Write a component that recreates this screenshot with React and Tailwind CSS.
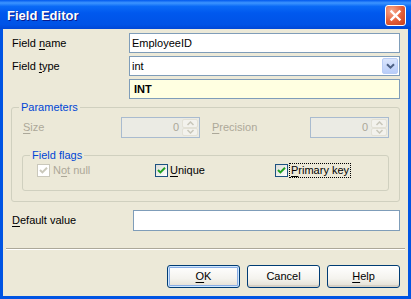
import React from 'react';

const Acc = ({ children }) => <span className="underline underline-offset-[2px]">{children}</span>;

const CheckBox = ({ checked, disabled }) => (
  <span
    className={`w-[13px] h-[13px] border flex items-center justify-center shrink-0 ${
      disabled ? 'border-[#cac8bb] bg-white' : 'border-[#1c5180] bg-[linear-gradient(135deg,#dcdcd7,#ffffff)]'
    }`}
  >
    {checked && (
      <svg width="11" height="11" viewBox="0 0 11 11">
        <path d="M2 5 L4.4 7.4 L9 2.8" fill="none" stroke={disabled ? '#cac8bb' : '#21a121'} strokeWidth="2" />
      </svg>
    )}
  </span>
);

const SpinArrow = ({ up }) => (
  <div className="flex-1 flex items-center justify-center bg-[#f3f2ed] border border-[#e3e1d6] rounded-[2px]">
    <svg width="9" height="5" viewBox="0 0 9 5">
      <path d={up ? 'M1.5 4 L4.5 1 L7.5 4' : 'M1.5 1 L4.5 4 L7.5 1'} fill="none" stroke="#c9c7ba" strokeWidth="1.5" />
    </svg>
  </div>
);

const SpinBox = ({ value }) => (
  <div className="w-[79px] h-[21px] border border-[#a9bbcf] bg-[#ebebe4] flex items-stretch p-[1px]">
    <span className="flex-1 text-right pr-[3px] text-[#aca899] leading-[17px]">{value}</span>
    <div className="w-[16px] flex flex-col">
      <SpinArrow up />
      <SpinArrow />
    </div>
  </div>
);

const XpButton = ({ children, isDefault }) => (
  <button
    className={`w-[73px] h-[23px] border border-[#003c74] rounded-[3px] bg-[linear-gradient(to_bottom,#ffffff,#f4f3ee_60%,#e3ded2)] text-black ${
      isDefault ? 'shadow-[inset_0_0_0_1px_#cee7ff,inset_0_0_0_2px_#89ade4]' : 'shadow-[inset_0_-2px_0_#d6d0c5]'
    }`}
  >
    {children}
  </button>
);

export default function App() {
  return (
    <div className="w-[411px] h-[299px] bg-[#0054e3] flex flex-col font-['Liberation_Sans',Arial,sans-serif] text-[11px] text-black">
      {/* Title bar */}
      <div className="h-[29px] shrink-0 flex items-start justify-between pl-[7px] pr-[5px] bg-[linear-gradient(to_bottom,#0058ee_0%,#3d95ff_10%,#0a6af6_22%,#0058ee_45%,#0053e6_85%,#0047d6_100%)]">
        <span className="mt-[6px] text-[13px] font-bold text-white [text-shadow:1px_1px_#0a1a8c]">Field Editor</span>
        <div className="mt-[5px] w-[21px] h-[21px] rounded-[3px] border border-white bg-[radial-gradient(circle_at_30%_25%,#f7a98d,#e35d38_55%,#c63f1d)] flex items-center justify-center">
          <svg width="13" height="13" viewBox="0 0 13 13">
            <path d="M2.5 2.5 L10.5 10.5 M10.5 2.5 L2.5 10.5" stroke="white" strokeWidth="2.4" strokeLinecap="square" />
          </svg>
        </div>
      </div>

      {/* Client area */}
      <div className="flex-1 mx-[3px] mb-[3px] bg-[#ece9d8] px-[8px] pt-[4px] pb-[8px] flex flex-col">
        <div className="flex flex-col gap-[3px]">
          <div className="flex items-center h-[20px]">
            <span className="w-[118px] pl-[1px]">Field <Acc>n</Acc>ame</span>
            <div className="flex-1 h-full border border-[#7f9db9] bg-white pl-[2px] leading-[18px]">EmployeeID</div>
          </div>
          <div className="flex items-center h-[20px]">
            <span className="w-[118px] pl-[1px]">Field <Acc>t</Acc>ype</span>
            <div className="flex-1 h-full border border-[#7f9db9] bg-white flex items-stretch p-[1px]">
              <span className="flex-1 pl-[1px] leading-[16px]">int</span>
              <div className="w-[16px] rounded-[2px] border border-[#b9cdf5] bg-[linear-gradient(to_bottom,#dbe6fd,#b8cdf9)] flex items-center justify-center">
                <svg width="9" height="6" viewBox="0 0 9 6">
                  <path d="M1 1.2 L4.5 4.6 L8 1.2" fill="none" stroke="#4d6185" strokeWidth="2" />
                </svg>
              </div>
            </div>
          </div>
          <div className="flex items-center h-[20px]">
            <span className="w-[118px]" />
            <div className="flex-1 h-full border border-[#7f9db9] bg-[#ffffe1] pl-[4px] font-bold leading-[18px]">INT</div>
          </div>
        </div>

        {/* Parameters group */}
        <fieldset className="mt-[2px] m-0 p-0 min-w-0 border border-[#d0d0bf] rounded-[3px]">
          <legend className="ml-[7px] px-[2px] h-[13px] leading-[13px] text-[#0046d5]">Parameters</legend>
          <div className="px-[10px] pt-[3px] pb-[10px]">
            <div className="flex items-center h-[21px]">
              <span className="w-[99px] pl-[1px] text-[#aca899]"><Acc>S</Acc>ize</span>
              <SpinBox value="0" />
              <span className="ml-[12px] w-[98px] text-[#aca899]"><Acc>P</Acc>recision</span>
              <SpinBox value="0" />
            </div>

            <fieldset className="mt-[11px] m-0 p-0 min-w-0 border border-[#d0d0bf] rounded-[3px]">
              <legend className="ml-[7px] px-[2px] h-[13px] leading-[13px] text-[#0046d5]">Field flags</legend>
              <div className="pl-[14px] pt-[1px] pb-[12px] flex items-center">
                <div className="w-[118px] h-[15px] flex items-center gap-[3px]">
                  <CheckBox checked disabled />
                  <span className="text-[#aca899]">N<Acc>o</Acc>t null</span>
                </div>
                <div className="w-[120px] h-[15px] flex items-center gap-[2px]">
                  <CheckBox checked />
                  <span><Acc>U</Acc>nique</span>
                </div>
                <div className="h-[15px] flex items-center gap-[1px]">
                  <CheckBox checked />
                  <span className="border border-dotted border-black px-[1px] leading-[13px]"><Acc>P</Acc>rimary key</span>
                </div>
              </div>
            </fieldset>
          </div>
        </fieldset>

        <div className="mt-[8px] flex items-center h-[21px]">
          <span className="w-[122px] pl-[1px]"><Acc>D</Acc>efault value</span>
          <div className="flex-1 h-full border border-[#7f9db9] bg-white" />
        </div>

        <div className="mt-[17px] -mx-[5px] h-[2px] border-t border-[#aca899] border-b border-b-white" />

        <div className="mt-[15px] flex justify-end gap-[7px]">
          <XpButton isDefault><Acc>O</Acc>K</XpButton>
          <XpButton>Cancel</XpButton>
          <XpButton><Acc>H</Acc>elp</XpButton>
        </div>
      </div>
    </div>
  );
}
